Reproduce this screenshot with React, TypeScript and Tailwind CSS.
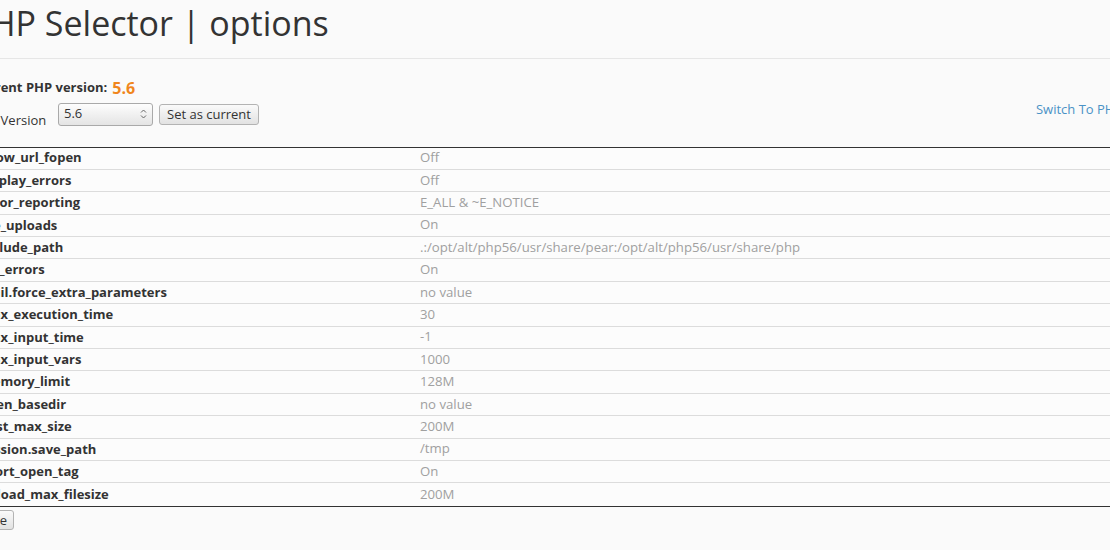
import React from "react";

const options: [string, string][] = [
  ["allow_url_fopen", "Off"],
  ["display_errors", "Off"],
  ["error_reporting", "E_ALL & ~E_NOTICE"],
  ["file_uploads", "On"],
  ["include_path", ".:/opt/alt/php56/usr/share/pear:/opt/alt/php56/usr/share/php"],
  ["log_errors", "On"],
  ["mail.force_extra_parameters", "no value"],
  ["max_execution_time", "30"],
  ["max_input_time", "-1"],
  ["max_input_vars", "1000"],
  ["memory_limit", "128M"],
  ["open_basedir", "no value"],
  ["post_max_size", "200M"],
  ["session.save_path", "/tmp"],
  ["short_open_tag", "On"],
  ["upload_max_filesize", "200M"],
];

function SpinArrows() {
  return (
    <svg width="7" height="12" viewBox="0 0 7 12" className="text-[#666]">
      <path d="M1 4.5 L3.5 2 L6 4.5" fill="none" stroke="currentColor" strokeWidth="1" />
      <path d="M1 7.5 L3.5 10 L6 7.5" fill="none" stroke="currentColor" strokeWidth="1" />
    </svg>
  );
}

export default function App() {
  return (
    <div
      className="w-[1110px] h-[550px] overflow-hidden bg-[#fafafa] text-[#333]"
      style={{ fontFamily: '"Open Sans", "Liberation Sans", sans-serif' }}
    >
      {/* Page header */}
      <div className="border-b border-[#e6e6e6] pb-[14px]">
        <h1 className="ml-[-30px] mt-[3px] text-[34px] leading-[41px] font-normal text-[#333] whitespace-nowrap">
          PHP Selector | options
        </h1>
      </div>

      <div className="ml-[-28px] w-[1219px]">
        {/* Current version */}
        <div className="mt-[19px] flex items-center h-[20px] whitespace-nowrap">
          <span className="text-[13px] font-bold">Current PHP version:</span>
          <span className="ml-[5px] text-[16px] font-bold text-[#f0861c]">5.6</span>
        </div>

        {/* Version picker */}
        <div className="mt-[2px] flex items-end justify-between">
          <div className="flex items-end">
            <span className="w-[86px] text-[13px] leading-[14px] mb-[-1px] whitespace-nowrap">
              PHP Version
            </span>
            <div className="flex items-center">
              <div className="w-[95px] h-[23px] flex items-center justify-between pl-[5px] pr-[5px] border border-[#a9a9a9] rounded-[3px] bg-linear-to-b from-[#fdfdfd] to-[#e4e4e4] text-[13px]">
                <span>5.6</span>
                <SpinArrows />
              </div>
              <button className="ml-[6px] h-[21px] px-[7px] border border-[#b3b3b3] rounded-[3px] bg-linear-to-b from-[#fafafa] to-[#e2e2e2] text-[13px] leading-[19px] text-[#333] whitespace-nowrap">
                Set as current
              </button>
            </div>
          </div>
          <a className="mb-[6px] text-[13px] text-[#4a92c6] whitespace-nowrap">
            Switch To PHP Extensions
          </a>
        </div>

        {/* Options table */}
        <div className="mt-[21px] border-t border-b border-[#333]">
          {options.map(([name, value], i) => (
            <div
              key={name}
              className={`flex items-center h-[22.4px] text-[13px] ${
                i < options.length - 1 ? "border-b border-[#dcdcdc]" : ""
              } bg-[#fcfcfc]`}
            >
              <div className="w-[440px] pl-[8px] font-bold text-[#333] whitespace-nowrap">
                {name}
              </div>
              <div className="pl-[8px] text-[13.2px] text-[#a0a0a0] whitespace-nowrap">{value}</div>
            </div>
          ))}
        </div>

        {/* Save */}
        <button className="mt-[1px] h-[20px] px-[6px] border border-[#b3b3b3] rounded-[3px] bg-linear-to-b from-[#fafafa] to-[#e2e2e2] text-[13px] leading-[18px] text-[#333]">
          Save
        </button>
      </div>
    </div>
  );
}
